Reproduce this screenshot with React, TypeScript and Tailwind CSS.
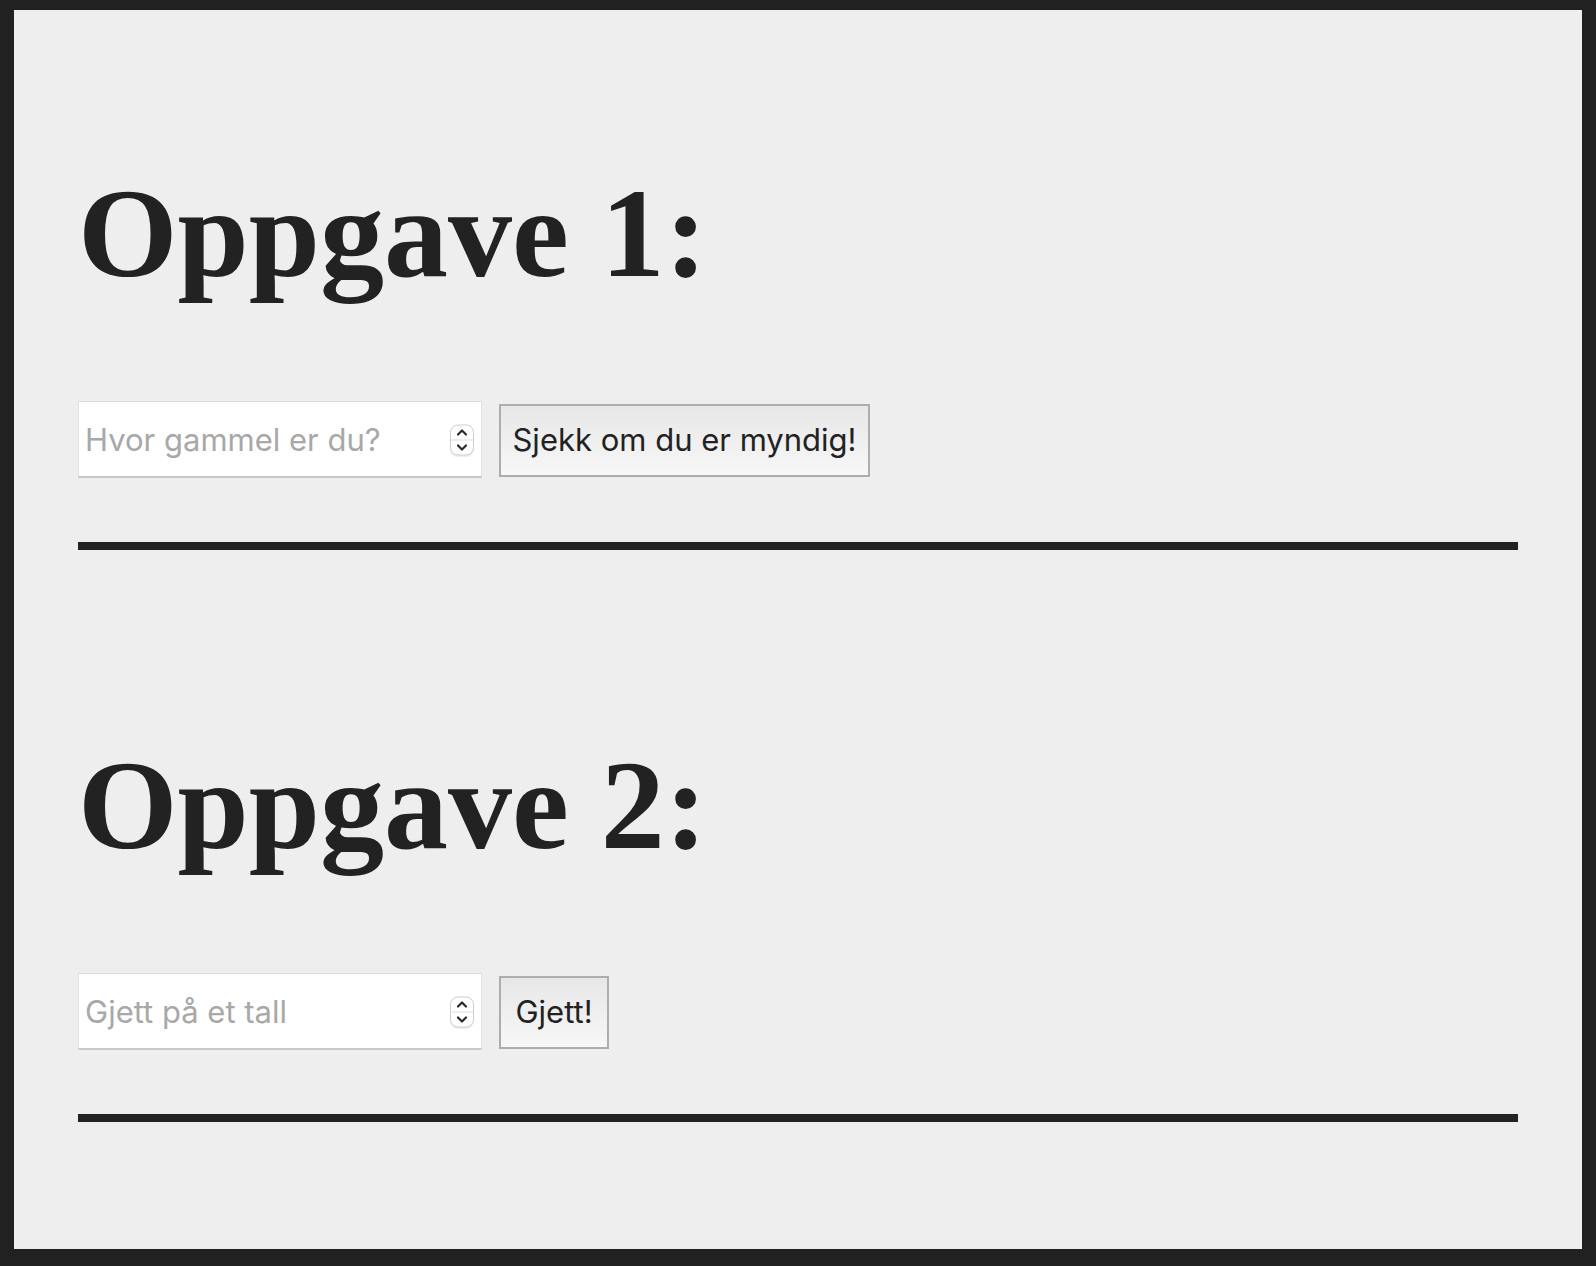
import React from "react";

function Spinner() {
  return (
    <div className="pointer-events-none absolute right-[8px] top-1/2 -translate-y-1/2 flex h-[31px] w-[24px] flex-col overflow-hidden rounded-[8px] border border-[#cfcfcf] bg-white shadow-[0_1px_1px_rgba(0,0,0,0.08)]">
      <div className="flex flex-1 items-center justify-center border-b border-[#dedede]">
        <svg width="12" height="8" viewBox="0 0 12 8" fill="none">
          <path d="M2 6L6 2L10 6" stroke="#2a2a2a" strokeWidth="2.2" strokeLinecap="round" strokeLinejoin="round" />
        </svg>
      </div>
      <div className="flex flex-1 items-center justify-center">
        <svg width="12" height="8" viewBox="0 0 12 8" fill="none">
          <path d="M2 2L6 6L10 2" stroke="#2a2a2a" strokeWidth="2.2" strokeLinecap="round" strokeLinejoin="round" />
        </svg>
      </div>
    </div>
  );
}

function Task({ title, placeholder, button, buttonWidth, first }: { title: string; placeholder: string; button: string; buttonWidth: string; first?: boolean }) {
  return (
    <section className={first ? "" : "mt-[181px]"}>
      <h1 className="m-0 text-[128px] font-bold leading-[148px] text-[#222222] [font-family:'Liberation_Serif','Times_New_Roman',serif]">
        {title}
      </h1>
      <div className="mt-[94px] flex items-end gap-[17px]">
        <div className="relative h-[77px] w-[404px]">
          <input
            type="text"
            placeholder={placeholder}
            className="h-full w-full border border-x-[#e2e2e2] border-t-[#dadada] border-b-2 border-b-[#c9c9c9] bg-white pl-[6px] pr-[40px] text-[31px] text-[#222] outline-none placeholder:text-[#a8a8a8] [font-family:Inter,'Liberation_Sans',sans-serif]"
          />
          <Spinner />
        </div>
        <button
          className={`mb-[1px] h-[73px] ${buttonWidth} border-2 border-[#adadad] bg-gradient-to-b from-[#e7e7e7] to-[#f7f7f7] text-center text-[31px] text-[#222] [font-family:Inter,'Liberation_Sans',sans-serif]`}
        >
          {button}
        </button>
      </div>
      <div className="mt-[64px] h-[8px] w-full bg-[#222222]" />
    </section>
  );
}

export default function App() {
  return (
    <div className="flex h-[1266px] w-full flex-col bg-[#212121] px-[14px] pb-[17px] pt-[10px]">
      <div className="flex-1 bg-[#eeeeee] px-[64px] pt-[149px]">
        <Task first title="Oppgave 1:" placeholder="Hvor gammel er du?" button="Sjekk om du er myndig!" buttonWidth="w-[371px]" />
        <Task title="Oppgave 2:" placeholder="Gjett på et tall" button="Gjett!" buttonWidth="w-[110px]" />
      </div>
    </div>
  );
}
